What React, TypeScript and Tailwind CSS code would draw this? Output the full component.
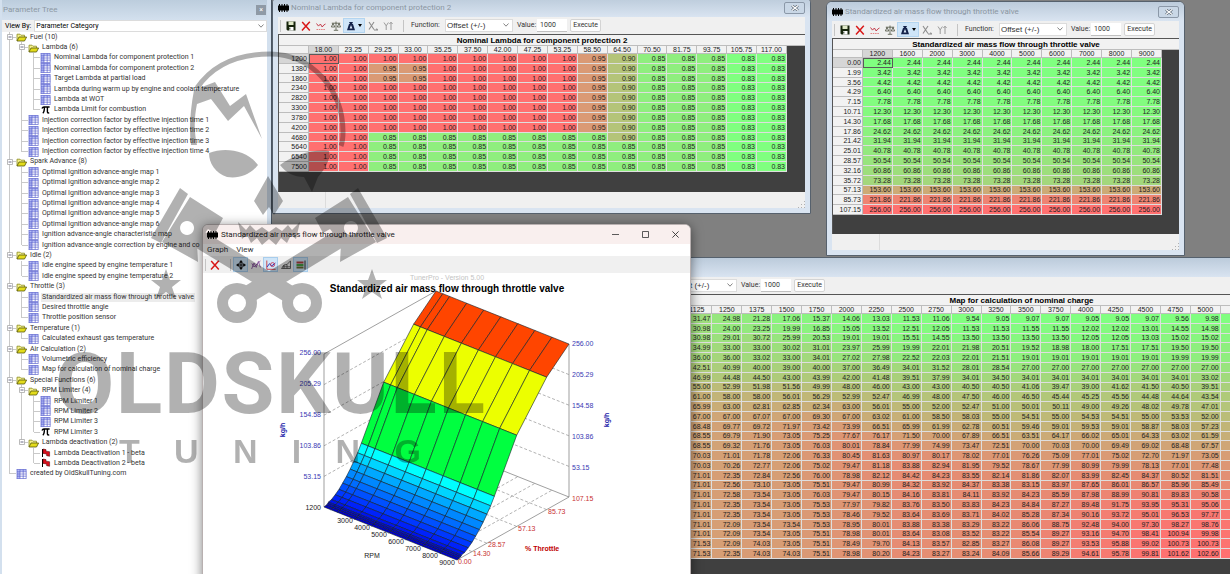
import React from "react";

// Libs
import clsx from "clsx";

// Types
type IconName = "folder" | "table" | "pi" | "flag";

interface TreeNode {
  label: string;
  icon?: IconName;
  active?: boolean;
  children?: TreeNode[];
}

interface TreeRow extends TreeNode {
  guides: boolean[];
  last: boolean;
}

interface GridProps {
  title: string;
  columns: string[];
  rows: string[];
  values: string[][];
  min: number;
  max: number;
  className: string;
  skipped?: number;
}

// Parameter tree
const tree: TreeNode[] = [
  {
    label: "Fuel (10)",
    children: [
      {
        label: "Lambda (6)",
        children: [
          { label: "Nominal Lambda for component protection 1" },
          { label: "Nominal Lambda for component protection 2" },
          { label: "Target Lambda at partial load" },
          { label: "Lambda during warm up by engine and coolant temperature" },
          { label: "Lambda at WOT" },
          { label: "Lambda Limit for combustion", icon: "pi" },
        ],
      },
      { label: "Injection correction factor by effective injection time 1" },
      { label: "Injection correction factor by effective injection time 2" },
      { label: "Injection correction factor by effective injection time 3" },
      { label: "Injection correction factor by effective injection time 4" },
    ],
  },
  {
    label: "Spark Advance (8)",
    children: [
      { label: "Optimal Ignition advance-angle map 1" },
      { label: "Optimal Ignition advance-angle map 2" },
      { label: "Optimal Ignition advance-angle map 3" },
      { label: "Optimal Ignition advance-angle map 4" },
      { label: "Optimal Ignition advance-angle map 5" },
      { label: "Optimal Ignition advance-angle map 6" },
      { label: "Ignition advance-angle characteristic map" },
      { label: "Ignition advance-angle correction by engine and co" },
    ],
  },
  {
    label: "Idle (2)",
    children: [
      { label: "Idle engine speed by engine temperature 1" },
      { label: "Idle engine speed by engine temperature 2" },
    ],
  },
  {
    label: "Throttle (3)",
    children: [
      { label: "Standardized air mass flow through throttle valve", active: true },
      { label: "Desired throttle angle" },
      { label: "Throttle position sensor" },
    ],
  },
  {
    label: "Temperature (1)",
    children: [{ label: "Calculated exhaust gas temperature" }],
  },
  {
    label: "Air Calculation (2)",
    children: [
      { label: "Volumetric efficiency" },
      { label: "Map for calculation of nominal charge" },
    ],
  },
  {
    label: "Special Functions (6)",
    children: [
      {
        label: "RPM Limiter (4)",
        children: [
          { label: "RPM Limiter 1" },
          { label: "RPM Limiter 2" },
          { label: "RPM Limiter 3" },
          { label: "RPM Limiter 3", icon: "pi" },
        ],
      },
      {
        label: "Lambda deactivation (2)",
        children: [
          { label: "Lambda Deactivation 1 - beta", icon: "flag" },
          { label: "Lambda Deactivation 2 - beta", icon: "flag" },
        ],
      },
    ],
  },
  { label: "created by OldSkullTuning.com" },
];

function flatten(nodes: TreeNode[], guides: boolean[] = []): TreeRow[] {
  return nodes.flatMap((node, i) => {
    const last = i === nodes.length - 1;
    return [
      { ...node, guides, last },
      ...(node.children ? flatten(node.children, [...guides, !last]) : []),
    ];
  });
}

// Table data
const split = (text: string) => text.trim().split(/\s+/);
const lines = (text: string) => text.trim().split("\n").map(split);

const lambdaColumns = split(
  "18.00 23.25 29.25 33.00 35.25 37.50 42.00 47.25 53.25 58.50 64.50 70.50 81.75 93.75 105.75 117.00",
);
const lambdaRows = split(
  "1200 1380 1860 2340 2820 3300 3780 4200 4680 5640 6540 7500",
);
const lambdaTail = ["0.85", "0.85", "0.85", "0.83", "0.83"];
const lambdaValues = lambdaRows.map((_, i) => {
  if (i >= 8) {
    return ["1.00", "1.00", ...Array(8).fill("0.85"), i === 8 ? "0.90" : "0.85", ...lambdaTail];
  }
  const mid = i === 1 || i === 2 ? "0.95" : "1.00";
  return ["1.00", "1.00", mid, mid, ...Array(5).fill("1.00"), "0.95", "0.90", ...lambdaTail];
});

const rpm = split("1200 1600 2000 3000 4000 5000 6000 7000 8000 9000");
const throttle = split(
  "0.00 1.99 3.56 4.29 7.15 10.71 14.30 17.86 21.42 25.01 28.57 32.16 35.72 57.13 85.73 107.15",
);
const airMass = split(
  "2.44 3.42 4.42 6.40 7.78 12.30 17.68 24.62 31.94 40.78 50.54 60.86 73.28 153.60 221.86 256.00",
);
const airMassValues = airMass.map((v) => rpm.map(() => v));

const chargeColumns = split(
  "1125 1250 1375 1500 1750 2000 2250 2500 2750 3000 3250 3500 3750 4000 4250 4500 4750 5000",
);
const chargeValues = lines(`
31.47 24.98 21.28 17.06 15.37 14.06 13.03 11.53 11.06 9.54 9.05 9.07 9.07 9.05 9.05 9.07 9.56 9.98
30.98 24.00 23.25 19.99 16.85 15.05 13.52 12.51 12.05 11.53 11.53 11.55 11.55 12.02 12.02 13.01 14.55 14.98
30.98 29.01 30.72 25.99 20.53 19.01 19.01 15.51 14.55 13.50 13.50 13.50 13.50 12.05 12.05 13.03 15.02 15.02
34.99 33.00 33.00 30.02 31.01 23.97 25.99 19.99 22.01 21.98 20.51 19.52 18.98 18.00 17.51 17.51 19.50 19.50
36.00 36.00 33.02 33.00 34.01 27.02 27.98 22.52 22.03 22.01 21.51 19.01 19.01 19.01 19.01 19.01 19.99 19.99
42.51 40.99 40.00 39.00 40.00 37.00 36.49 34.01 31.52 28.01 28.54 27.00 27.00 27.00 27.00 27.00 27.00 27.00
46.99 44.48 44.50 43.00 43.99 42.00 41.48 39.51 37.99 34.01 34.50 34.01 34.01 34.01 34.01 34.01 34.01 33.02
55.00 52.99 51.98 51.56 49.99 48.00 46.00 43.00 43.00 40.50 40.50 41.06 39.47 39.00 41.62 41.50 40.50 39.51
61.00 58.00 58.00 56.01 56.29 52.99 52.47 46.99 48.00 47.50 46.00 46.50 45.44 45.25 45.56 44.48 44.64 43.54
65.99 63.00 62.81 62.85 62.34 63.00 56.01 55.00 52.00 52.47 51.00 50.01 50.11 49.00 49.26 48.02 49.78 47.01
67.00 67.00 67.07 67.00 69.30 67.00 63.02 61.00 58.50 58.03 55.00 54.51 55.00 54.53 54.51 55.00 53.53 52.00
68.48 69.77 69.72 71.97 73.42 73.99 66.51 65.99 61.99 62.78 60.51 59.46 59.01 59.53 59.01 58.87 58.03 57.23
68.55 69.79 71.90 73.05 75.25 77.67 76.17 71.50 70.00 67.89 66.51 63.51 64.17 66.02 65.01 64.33 63.02 61.59
68.55 69.32 71.76 73.05 76.03 80.01 78.84 77.99 74.99 73.47 72.51 70.00 70.03 70.00 69.49 69.02 68.48 67.57
70.03 71.01 71.78 72.06 76.33 80.45 81.63 80.97 80.17 78.02 77.01 76.26 75.09 77.01 75.02 72.70 71.97 73.05
70.03 70.26 72.77 72.06 75.02 79.47 81.18 83.88 82.94 81.95 79.52 78.67 77.99 80.99 79.99 78.13 77.01 77.48
71.01 72.35 72.84 72.56 76.00 78.98 82.12 84.42 84.23 83.55 82.14 81.86 82.07 83.99 82.45 84.37 80.52 81.51
71.01 72.56 73.10 73.05 75.51 79.47 80.99 84.32 83.92 84.37 83.38 83.15 83.97 87.65 86.01 86.57 85.96 85.49
71.01 72.58 73.54 73.05 76.03 79.47 80.15 84.16 83.81 84.11 83.92 84.23 85.59 87.98 88.99 90.81 89.83 90.58
71.01 72.35 73.54 73.05 75.53 77.97 79.82 83.76 83.50 83.83 84.23 84.84 87.27 89.48 91.75 93.95 95.31 95.06
71.01 72.35 73.54 73.05 75.53 78.46 79.52 83.64 83.69 83.71 84.02 85.28 87.34 90.16 93.72 95.01 96.53 97.77
71.01 72.09 73.54 73.54 75.53 78.95 80.01 83.88 83.38 83.29 83.22 86.06 88.75 92.48 94.00 97.30 98.27 98.76
71.01 72.09 73.54 73.05 75.51 78.98 80.01 83.64 83.08 83.52 83.22 85.54 89.27 93.16 94.70 98.41 100.94 99.98
71.53 72.09 74.03 73.05 75.51 78.49 79.70 84.13 83.57 82.85 83.27 86.08 89.27 93.53 95.88 99.02 100.73 100.73
71.53 72.35 74.03 74.03 75.51 78.98 80.20 84.23 83.27 83.24 84.09 85.66 89.29 94.61 95.78 99.81 101.62 102.60
`);

// Green for the lowest value, red for the highest
function heat(value: string, min: number, max: number) {
  const f = Math.min(1, Math.max(0, (Number(value) - min) / (max - min)));
  const mix = (a: number, b: number) => Math.round(a + (b - a) * f);
  return `rgb(${mix(128, 255)}, ${mix(255, 112)}, ${mix(128, 112)})`;
}

// Icons
function ChipIcon() {
  return (
    <svg viewBox="0 0 11 8" className="w-[11px] h-2 shrink-0">
      <path d="M0 1.5h11v5H0z" />
      <path d="M1.5 0v8M4 0v8M6.5 0v8M9 0v8" stroke="#000" />
    </svg>
  );
}

function TreeIcon({ name }: { name: IconName }) {
  if (name === "folder") {
    return (
      <svg viewBox="0 0 11 10" className="w-[11px] h-[10px] shrink-0">
        <path d="M1 9V2.2h3l1 1h3.5V5" fill="#f4f08a" stroke="#8a8a20" strokeWidth=".8" />
        <path d="M1 9l2-4h7.6L8.5 9z" fill="#e3dc1c" stroke="#55550a" strokeWidth=".8" />
      </svg>
    );
  }
  if (name === "pi") {
    return (
      <svg viewBox="0 0 11 10" className="w-[11px] h-[10px] shrink-0">
        <path
          d="M2 3.4C2.4 2.4 3 2 4 2h5.6M4.4 2.2c0 3-.3 5-1.6 6M7.4 2.2v4.6c0 1 .7 1.5 1.8.8"
          fill="none"
          stroke="#000"
          strokeWidth="1.4"
        />
      </svg>
    );
  }
  if (name === "flag") {
    return (
      <svg viewBox="0 0 11 10" className="w-[11px] h-[10px] shrink-0">
        <path d="M2.5 1v8" stroke="#000" />
        <path d="M3 1l3 .6v1.6l3.6.5v4.6l-3-.6V6L3 5.4z" fill="#d80f1c" stroke="#400" strokeWidth=".5" />
      </svg>
    );
  }
  return (
    <svg viewBox="0 0 11 10" className="w-[11px] h-[10px] shrink-0">
      <path d="M1 .5h9v9H1z" fill="#fff" />
      <path d="M1 .5h3v9H1zM1 .5h9v2H1z" fill="#b4bbf5" />
      <path
        d="M.6 .5h9.8M1 2.8h9.4M1 5h9.4M1 7.2h9.4M.6 9.5h9.8M1 .5v9M4 .5v9M7.2 .5v9M10.2 .5v9"
        stroke="#4a52c8"
        strokeWidth=".6"
      />
    </svg>
  );
}

function ToolIcon({ name }: { name: string }) {
  return (
    <svg viewBox="0 0 10 10" fill="none" className="size-[10px] shrink-0">
      {name === "save" && (
        <>
          <path d="M.5.5h9v9h-8l-1-1z" fill="#16240c" />
          <path d="M2.5.5h5v3.6h-5z" fill="#dfe8c8" />
          <path d="M3 6h4.5v3.5H3z" fill="#fff" />
          <path d="M3.8 6.6v2" stroke="#16240c" />
        </>
      )}
      {name === "close" && (
        <path d="M1.2 1l7.6 8.4M8.8.8L1 9.4" stroke="#d81818" strokeWidth="1.5" />
      )}
      {name === "graph" && (
        <>
          <path d="M.5 2.5l2 2.6L4.4 3l1.8 3 1.6-2L9.5 3" stroke="#c02a3a" strokeWidth=".9" />
          <path d="M.5 8.5h9" stroke="#d66" strokeWidth=".8" strokeDasharray="1.5 .8" />
        </>
      )}
      {name === "scale" && (
        <path
          d="M5 .5V9M2.8 9.3h4.4M.8 2.2h8.4M2 2.4L.4 6h3.4zM8 2.4L6.3 6h3.3z"
          stroke="#4c5240"
          strokeWidth=".8"
        />
      )}
      {name === "weight" && (
        <>
          <path d="M3 1h4L6 3h1l2 6.2H1L3 3h1z" fill="#14224a" />
          <path d="M5 4l1.4 3.6H3.6z" fill="#dbe9f8" />
        </>
      )}
      {name === "xaxis" && (
        <path d="M1 1l5 7.5M6 1L1 8.5M6 9h4M8.4 7.6L9.8 9" stroke="#8c8c8c" strokeWidth="1.1" />
      )}
      {name === "yaxis" && (
        <path d="M1 1.5l2.2 3.4L5.4 1.5M3.2 5v4M8 9V1.4M6.4 3L8 1.2 9.6 3" stroke="#9a9a9a" />
      )}
      {name === "move" && (
        <>
          <circle cx="5" cy="5" r="2.6" stroke="#111" strokeWidth=".9" />
          <path d="M5 1v8M1 5h8" stroke="#111" />
          <path d="M5 0l1.6 2H3.4zM5 10l1.6-2H3.4zM0 5l2-1.6v3.2zM10 5L8 3.4v3.2z" fill="#111" />
        </>
      )}
      {name === "nodes" && (
        <path d="M.6 9L3 3l2.2 4.4L7.4 1.4l2 6M.8 3.4L3 7l3-3 3.4-3" stroke="#87519c" strokeWidth=".9" />
      )}
      {name === "trace" && (
        <>
          <path d="M.8.5v8.8h8.8" stroke="#c22" strokeWidth=".8" />
          <path d="M1 7l2.6-3.4L5.6 6 9.4 3" stroke="#3436b8" />
          <circle cx="6.6" cy="4.6" r="2" stroke="#c2274a" strokeWidth=".8" />
        </>
      )}
      {name === "surface" && (
        <path d="M.5 8.5L3 5l3-.5 3.5-3.6v7.6zM3 5v3.5M6 4.5v4M1.6 6.8h7.8" stroke="#444" strokeWidth=".8" />
      )}
      {name === "bands" && (
        <>
          <path d="M.5 1.5h7v2h-7z" fill="#b04040" />
          <path d="M.5 4h7v2h-7z" fill="#46a046" />
          <path d="M.5 6.5h7v2h-7z" fill="#6a6a30" />
          <path d="M9 .5v9" stroke="#333" />
        </>
      )}
    </svg>
  );
}

function ToolButton({ name, on }: { name: string; on?: boolean }) {
  return (
    <button
      type="button"
      aria-label={name}
      className={clsx(
        "flex items-center justify-center w-[15px] h-[15px]",
        on && "bg-[#cfe5f8] border border-[#a8cdec]",
      )}
    >
      <ToolIcon name={name} />
    </button>
  );
}

// Parameter tree panel
function ParameterTree() {
  return (
    <aside className="flex flex-col w-[272px] shrink-0 bg-[#d3e0ee] border-r border-[#4a5562] pl-[2px] pr-1 text-[7px] leading-none">
      <header className="flex items-center justify-between h-5 shrink-0 bg-linear-to-b from-[#bccddd] to-[#d3e0ee] pl-px pr-px">
        <h2 className="text-[#8d98a3] text-[8px]">Parameter Tree</h2>
        <button
          type="button"
          aria-label="Close panel"
          className="flex items-center justify-center w-[10px] h-[10px] bg-[#8f9aa6] text-white"
        >
          ×
        </button>
      </header>
      <div className="flex items-center h-3 shrink-0 bg-[#f0f0f0] pl-[3px] gap-[3px]">
        <label htmlFor="view-by">View By:</label>
        <div className="relative flex-1 h-full">
          <select
            id="view-by"
            className="appearance-none block w-full h-full bg-white border border-[#dcdcdc] pl-px"
          >
            <option>Parameter Category</option>
          </select>
          <svg viewBox="0 0 6 4" className="absolute right-[3px] top-1 w-[6px] h-1">
            <path d="M.5.5L3 3.2 5.5.5" fill="none" stroke="#666" strokeWidth=".8" />
          </svg>
        </div>
      </div>
      <div className="flex-1 bg-white overflow-hidden">
        <ul className="grid auto-rows-fr h-[447px]">
          {flatten(tree).map((row, i) => (
            <li key={i} className="flex items-center pl-[2px] whitespace-nowrap text-[#333]">
              {row.guides.map((guide, g) => (
                <span key={g} className="flex w-3 self-stretch shrink-0">
                  <span className={clsx("w-[6px]", guide && "border-r border-[#c9c9c9]")} />
                </span>
              ))}
              <span className="relative flex w-3 self-stretch shrink-0">
                <span
                  className={clsx("w-[6px] border-r border-[#c9c9c9]", row.last ? "h-1/2" : "h-full")}
                />
                <span className="w-[6px] self-center border-t border-[#c9c9c9]" />
                {row.children && (
                  <svg viewBox="0 0 6 6" className="absolute left-[3px] top-[2px] size-[6px]">
                    <path d="M.5.5h5v5h-5z" fill="#fff" stroke="#a8a8a8" strokeWidth=".8" />
                    <path d="M1.5 3h3" stroke="#446" strokeWidth=".8" />
                  </svg>
                )}
              </span>
              <TreeIcon name={row.children ? "folder" : (row.icon ?? "table")} />
              <span className={clsx("ml-[2px] px-px", row.active && "bg-[#ececec] py-px")}>
                {row.label}
              </span>
            </li>
          ))}
        </ul>
      </div>
    </aside>
  );
}

// Table windows
function Toolbar({ id }: { id: string }) {
  return (
    <div className="flex items-center h-[17px] shrink-0 bg-[#f0f0f0] text-[7px] text-[#333]">
      <span className="w-px h-3 ml-[2px] mr-[2px] bg-[#c4c4c4]" />
      <ToolButton name="save" />
      <ToolButton name="close" />
      <ToolButton name="graph" />
      <ToolButton name="scale" />
      <button
        type="button"
        aria-label="weight"
        className="flex items-center w-[22px] h-[15px] pl-[2px] gap-[2px] bg-[#cfe5f8] border border-[#b4d5f0]"
      >
        <ToolIcon name="weight" />
        <svg viewBox="0 0 4 3" className="w-1 h-[3px]">
          <path d="M0 0h4L2 3z" />
        </svg>
      </button>
      <ToolButton name="xaxis" />
      <ToolButton name="yaxis" />
      <span className="w-px h-3 ml-2 mr-[7px] bg-[#c4c4c4]" />
      <label htmlFor={`${id}-function`} className="w-[30px]">
        Function:
      </label>
      <div className="relative w-[68px] h-[13px] ml-1">
        <select
          id={`${id}-function`}
          className="appearance-none block size-full bg-white border border-[#dcdcdc] pl-px text-[8px] leading-none font-['Liberation_Sans',sans-serif]"
        >
          <option>Offset (+/-)</option>
        </select>
        <svg viewBox="0 0 6 4" className="absolute right-1 top-1 w-[6px] h-1">
          <path d="M.5.5L3 3.2 5.5.5" fill="none" stroke="#666" strokeWidth=".8" />
        </svg>
      </div>
      <label htmlFor={`${id}-value`} className="ml-1">
        Value:
      </label>
      <input
        id={`${id}-value`}
        defaultValue="1000"
        className="w-[30px] h-[13px] ml-px bg-white border-b border-[#c0c0c0] pl-[3px]"
      />
      <button
        type="button"
        className="w-[31px] h-[13px] ml-[3px] bg-[#fdfdfd] border border-[#d4d4d4] rounded-xs"
      >
        Execute
      </button>
    </div>
  );
}

function Grid({ title, columns, rows, values, min, max, className, skipped = 0 }: GridProps) {
  const head = "border-r border-b border-[#bdbdbd] font-normal p-0";

  return (
    <div className="flex-1 flex flex-col bg-[#404040] border-t border-l border-[#555] font-['Liberation_Sans',sans-serif]">
      <h3 className="h-[11px] shrink-0 bg-[#f2f2f2] border-b border-[#bdbdbd] text-center text-[8px] leading-[11px] font-bold">
        {title}
      </h3>
      <table className={clsx("table-fixed border-separate border-spacing-0 text-[7px] leading-[7px] text-[#222]", className)}>
        <thead>
          <tr className="bg-[#f2f2f2]">
            <th className={head} />
            {skipped > 0 && <th colSpan={skipped} className={head} />}
            {columns.map((column, i) => (
              <th
                key={column}
                scope="col"
                className={clsx(head, "text-center", i === 0 && !skipped && "bg-[#d6d6d6]")}
              >
                {column}
              </th>
            ))}
            {skipped > 0 && <th className={head} />}
          </tr>
        </thead>
        <tbody>
          {values.map((row, r) => (
            <tr key={r}>
              <th
                scope="row"
                className={clsx(head, "pr-px text-right", r === 0 ? "bg-[#d6d6d6]" : "bg-[#f2f2f2]")}
              >
                {rows[r]}
              </th>
              {skipped > 0 && <td colSpan={skipped} className="p-0" />}
              {row.map((value, c) => (
                <td
                  key={c}
                  className={clsx(
                    "p-0 pr-px text-right border-r border-b border-[#dedede]",
                    r === 0 && c === 0 && !skipped && "outline outline-[#5a5a5a] -outline-offset-1",
                  )}
                  style={{ backgroundColor: heat(value, min, max) }}
                >
                  {value}
                </td>
              ))}
              {skipped > 0 && (
                <td
                  className="p-0 border-b border-[#dedede]"
                  style={{ backgroundColor: heat(row[row.length - 1], min, max) }}
                />
              )}
            </tr>
          ))}
        </tbody>
      </table>
    </div>
  );
}

function TableWindow({
  id,
  caption,
  className,
  children,
}: {
  id: string;
  caption: string;
  className: string;
  children: React.ReactNode;
}) {
  return (
    <section
      className={clsx(
        "absolute flex flex-col px-[5px] pb-[5px] bg-[#d9e4f1] border border-[#56616d] rounded-t-md overflow-hidden",
        className,
      )}
    >
      <header className="flex items-center h-[19px] shrink-0 -mx-[5px] px-[5px] bg-linear-to-b from-[#bccbdb] to-[#d9e4f1]">
        <ChipIcon />
        <h2 className="ml-[2px] text-[8px] leading-none text-[#8b96a2]">{caption}</h2>
        <button
          type="button"
          aria-label="Close window"
          className="flex items-center justify-center w-[21px] h-3 ml-auto border border-[#8b98a8] rounded-xs bg-[#c9d7e6]"
        >
          <svg viewBox="0 0 8 6" className="w-2 h-[6px]">
            <path d="M1 .5l6 5M7 .5l-6 5" stroke="#5c6876" strokeWidth="2.6" />
            <path d="M1 .5l6 5M7 .5l-6 5" stroke="#fff" strokeWidth="1.2" />
          </svg>
        </button>
      </header>
      <Toolbar id={id} />
      {children}
      <footer className="flex justify-between items-end h-4 shrink-0 bg-[#f0f0f0]">
        <span className="w-12 h-full border-r border-[#dcdcdc]" />
        <svg viewBox="0 0 7 7" className="size-[7px]">
          <path d="M6 0h1v1H6zM6 3h1v1H6zM3 3h1v1H3zM6 6h1v1H6zM3 6h1v1H3zM0 6h1v1H0z" fill="#b0b0b0" />
        </svg>
      </footer>
    </section>
  );
}

// 3D surface
const corner = { x: 324, y: 507 };
const bandColors = [
  "#0000c0", "#0000c8", "#0000d0", "#0008dc", "#0014ec", "#0022fa", "#0038ff", "#0050ff",
  "#006cff", "#0088ff", "#00a8ff", "#00d4ff", "#00ffff", "#00ff40", "#ecff00", "#ff4500",
];

// r, t and v run from 0 to 1 along the rpm, throttle and value axes
function project(r: number, t: number, v: number) {
  return { x: corner.x + r * 133 + t * 112, y: corner.y + r * 53 - t * 63 - v * 153 };
}

const rpmAt = (i: number) => (Number(rpm[i]) - 1200) / 7800;
const throttleAt = (i: number) => Number(throttle[i]) / 107.15;
const valueAt = (i: number) => (Number(airMass[i]) - 2.44) / 253.56;

function Segment({ from, to, dashed }: { from: number[]; to: number[]; dashed?: boolean }) {
  const a = project(from[0], from[1], from[2]);
  const b = project(to[0], to[1], to[2]);
  return (
    <line
      x1={a.x}
      y1={a.y}
      x2={b.x}
      y2={b.y}
      stroke={dashed ? "#a0a0a0" : "#777"}
      strokeWidth={dashed ? 0.8 : 0.7}
      strokeDasharray={dashed ? "3 2" : undefined}
    />
  );
}

function SurfaceChart() {
  const levels = ["53.15", "103.86", "154.58", "205.29", "256.00"];
  const cells: React.ReactNode[] = [];

  for (let t = throttle.length - 2; t >= 0; t--) {
    for (let r = 0; r < rpm.length - 1; r++) {
      const points = [
        project(rpmAt(r), throttleAt(t), valueAt(t)),
        project(rpmAt(r + 1), throttleAt(t), valueAt(t)),
        project(rpmAt(r + 1), throttleAt(t + 1), valueAt(t + 1)),
        project(rpmAt(r), throttleAt(t + 1), valueAt(t + 1)),
      ];
      cells.push(
        <polygon
          key={`${t}-${r}`}
          points={points.map((p) => `${p.x},${p.y}`).join(" ")}
          fill={bandColors[t + 1]}
          stroke="#10202a"
          strokeWidth=".6"
        />,
      );
    }
  }

  return (
    <svg
      viewBox="203 273 487 310"
      className="w-[487px] h-[310px] shrink-0 font-['Liberation_Sans',sans-serif] text-[7px]"
    >
      <text x="447" y="280" textAnchor="middle" fill="#c4c4c4">
        TunerPro - Version 5.00
      </text>
      {[0.2, 0.4, 0.6, 0.8].map((v) => (
        <React.Fragment key={v}>
          <Segment from={[0, 0, v]} to={[0, 1, v]} dashed />
          <Segment from={[0, 1, v]} to={[1, 1, v]} dashed />
        </React.Fragment>
      ))}
      {[6, 10, 13, 14].map((i) => (
        <Segment key={i} from={[0, throttleAt(i), 0]} to={[1, throttleAt(i), 0]} dashed />
      ))}
      {[3, 4, 5, 6, 7, 8].map((i) => (
        <Segment key={i} from={[rpmAt(i), 0, 0]} to={[rpmAt(i), 1, 0]} dashed />
      ))}
      <Segment from={[0, 0, 0]} to={[0, 0, 1]} />
      <Segment from={[0, 0, 1]} to={[0, 1, 1]} />
      <Segment from={[1, 1, 0]} to={[1, 1, 1]} />
      <Segment from={[0, 1, 0]} to={[1, 1, 0]} />
      <Segment from={[1, 0, 0]} to={[1, 1, 0]} />
      {cells}
      <text x="447" y="292" textAnchor="middle" className="text-[10px] font-bold">
        Standardized air mass flow through throttle valve
      </text>
      <g fill="#3a3ab4">
        {levels.map((level, i) => (
          <React.Fragment key={level}>
            <text x="321" y={479 - i * 31} textAnchor="end">
              {level}
            </text>
            <text x="572" y={470 - i * 31}>
              {level}
            </text>
          </React.Fragment>
        ))}
      </g>
      <g fill="#222">
        <text x="321" y="510" textAnchor="end">
          1200
        </text>
        {rpm.slice(3).map((value, i) => (
          <text key={value} x={345 + i * 17} y={523 + i * 7} textAnchor="middle">
            {value}
          </text>
        ))}
        <text x="372" y="558" textAnchor="middle">
          RPM
        </text>
      </g>
      <g fill="#c83232">
        <text x="458" y="564">0.00</text>
        <text x="473" y="556">14.30</text>
        <text x="488" y="547">28.57</text>
        <text x="518" y="531">57.13</text>
        <text x="548" y="514">85.73</text>
        <text x="572" y="501">107.15</text>
      </g>
      <text x="525" y="551" fill="#c00000" className="font-bold">
        % Throttle
      </text>
      <g fill="#1414a8" className="font-bold" textAnchor="middle">
        <text transform="translate(285 430) rotate(-90)">kg/h</text>
        <text transform="translate(609 420) rotate(-90)">kg/h</text>
      </g>
    </svg>
  );
}

function GraphWindow() {
  return (
    <section className="absolute left-[202px] top-[224px] w-[489px] flex flex-col bg-white border border-[#b8b0b0] rounded-t-md overflow-hidden shadow-[0_2px_12px_rgba(0,0,0,0.5)]">
      <header className="flex items-center h-[19px] shrink-0 bg-[#f9efee] pl-1 pr-[11px]">
        <ChipIcon />
        <h2 className="ml-[3px] text-[8px] leading-none text-[#222]">
          Standardized air mass flow through throttle valve
        </h2>
        <div className="flex items-center gap-[23px] ml-auto">
          <button type="button" aria-label="Minimize">
            <svg viewBox="0 0 7 7" className="size-[7px]">
              <path d="M0 3.5h7" stroke="#333" strokeWidth=".8" />
            </svg>
          </button>
          <button type="button" aria-label="Maximize">
            <svg viewBox="0 0 7 7" className="size-[7px]">
              <path d="M.5.5h6v6h-6z" fill="none" stroke="#333" strokeWidth=".8" />
            </svg>
          </button>
          <button type="button" aria-label="Close">
            <svg viewBox="0 0 7 7" className="size-[7px]">
              <path d="M.4.4l6.2 6.2M6.6.4L.4 6.6" stroke="#333" strokeWidth=".9" />
            </svg>
          </button>
        </div>
      </header>
      <nav className="flex items-center h-3 shrink-0 pl-1 gap-2 text-[8px] leading-none text-[#333]">
        <button type="button">Graph</button>
        <button type="button">View</button>
      </nav>
      <div className="flex items-center h-[17px] shrink-0 bg-[#f0f0f0] pl-[2px]">
        <span className="w-px h-3 bg-[#c4c4c4] mr-px" />
        <ToolButton name="close" />
        <span className="w-px h-3 ml-2 mr-[2px] bg-[#c4c4c4]" />
        <ToolButton name="move" on />
        <ToolButton name="nodes" />
        <ToolButton name="trace" on />
        <ToolButton name="surface" />
        <ToolButton name="bands" on />
      </div>
      <SurfaceChart />
    </section>
  );
}

// Brand overlay
function Piston() {
  return (
    <>
      <path d="M180 188l8 6-27 49-10-5z" />
      <path
        fillRule="evenodd"
        d="M190 197l33 21-8 15-7-4-11 14 1 19-36-20zM187 221a7 7 0 1 0 .1 0z"
      />
      <path d="M205 232l106 65-8 16-110-67z" />
      <path d="M166 269l4 11h11l-9 7 4 12-10-7-10 7 4-12-9-7h11z" />
    </>
  );
}

function Watermark() {
  return (
    <div className="absolute left-0 top-0 w-[540px] h-[480px] opacity-30 pointer-events-none select-none">
      <svg viewBox="0 0 540 330" className="w-[540px] h-[330px]">
        <defs>
          <mask id="rings">
            <path d="M0 0h540v330H0z" fill="#fff" />
            <circle cx="237" cy="303" r="9" />
            <circle cx="302" cy="303" r="9" />
          </mask>
        </defs>
        <path
          d="M197 88C214 63 240 54 270 54c42 0 73 36 73 78 0 5 0 9-2 14"
          fill="none"
          stroke="#000"
          strokeWidth="5"
        />
        <path d="M194 90l21-8 15 24 16-12 16 45-18-33-16 15-17-22-14 5c-3 14-3 28 0 41h-6c-2-16-1-33 3-55z" />
        <path d="M209 153c16-6 38-3 49 12-8 10-20 14-31 12-12-4-18-14-18-24z" />
        <path d="M280 165c14-10 32-16 49-14 2 8-4 18-11 26l-6 15-8-15c-10 0-18-4-24-12z" />
        <path d="M268 176l15 25-9 14-5-8-6 8-9-14z" />
        <path d="M238 222l8 8 4-5 6 6 6-4 7 5 7-5 6 4 6-6 4 5 8-8-4 17-5-4-4 8-6-5-5 7-7-6-7 6-5-7-6 5-4-8-5 4z" />
        <g mask="url(#rings)">
          <Piston />
          <g transform="translate(538 0) scale(-1 1)">
            <Piston />
          </g>
          <circle cx="237" cy="303" r="20" />
          <circle cx="302" cy="303" r="20" />
        </g>
      </svg>
      <div className="flex justify-between w-[430px] ml-[55px] h-[92px] text-[86px] leading-[108px] font-bold font-[Roboto,sans-serif]">
        {[..."OLDSKULL"].map((letter, i) => (
          <span key={i}>{letter}</span>
        ))}
      </div>
      <div className="flex justify-between w-[302px] ml-[119px] mt-3 text-[34px] leading-[34px] font-bold font-['Liberation_Sans',sans-serif]">
        {[..."TUNING"].map((letter, i) => (
          <span key={i}>{letter}</span>
        ))}
      </div>
    </div>
  );
}

export default function App() {
  return (
    <div className="relative flex h-screen overflow-hidden bg-[#808080] font-[Roboto,sans-serif]">
      <ParameterTree />
      <main className="relative flex-1 overflow-hidden">
        <TableWindow
          id="lambda"
          caption="Nominal Lambda for component protection 2"
          className="left-0 top-[-3px] w-[539px] h-[217px]"
        >
          <Grid
            title="Nominal Lambda for component protection 2"
            columns={lambdaColumns}
            rows={lambdaRows}
            values={lambdaValues}
            min={0.83}
            max={1}
            className="w-[508px] h-[126px]"
          />
        </TableWindow>
        <TableWindow
          id="air-mass"
          caption="Standardized air mass flow through throttle valve"
          className="left-[554px] top-px w-[359px] h-[255px]"
        >
          <Grid
            title="Standardized air mass flow through throttle valve"
            columns={rpm}
            rows={throttle}
            values={airMassValues}
            min={2.44}
            max={256}
            className="w-[329px] h-[165px]"
          />
        </TableWindow>
        <TableWindow
          id="charge"
          caption=""
          className="left-[224px] top-[257px] w-[1050px] h-[342px]"
        >
          <Grid
            title="Map for calculation of nominal charge"
            columns={chargeColumns}
            rows={[]}
            values={chargeValues}
            min={9.05}
            max={102.6}
            skipped={5}
            className="w-[748px] h-[253px]"
          />
        </TableWindow>
      </main>
      <GraphWindow />
      <Watermark />
    </div>
  );
}
